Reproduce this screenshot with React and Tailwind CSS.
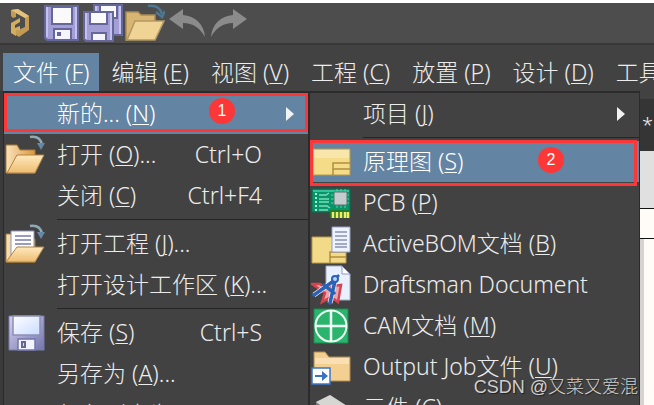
import React from 'react';
import { clsx } from 'clsx';

const fileMenu = [
  { label: '新的...', hotkey: 'N', active: true, arrow: true, badge: 1 },
  { label: '打开', hotkey: 'O', tail: '...', shortcut: 'Ctrl+O', icon: 'folder' },
  { label: '关闭', hotkey: 'C', shortcut: 'Ctrl+F4' },
  { separator: true },
  { label: '打开工程', hotkey: 'J', tail: '...', icon: 'project' },
  { label: '打开设计工作区', hotkey: 'K', tail: '...' },
  { separator: true },
  { label: '保存', hotkey: 'S', shortcut: 'Ctrl+S', icon: 'save' },
  { label: '另存为', hotkey: 'A', tail: '...' },
  { label: '保存副本为', tail: '...' },
];

const newMenu = [
  { label: '项目', hotkey: 'J', arrow: true },
  { separator: true },
  { label: '原理图', hotkey: 'S', active: true, badge: 2, icon: 'schematic' },
  { label: 'PCB', hotkey: 'P', icon: 'pcb' },
  { label: 'ActiveBOM文档', hotkey: 'B', icon: 'bom' },
  { label: 'Draftsman Document', icon: 'draftsman' },
  { label: 'CAM文档', hotkey: 'M', icon: 'cam' },
  { label: 'Output Job文件', hotkey: 'U', icon: 'job' },
  { label: '元件', hotkey: 'C', icon: 'component' },
];

const menuBar = [
  { label: '文件', hotkey: 'F', active: true },
  { label: '编辑', hotkey: 'E' },
  { label: '视图', hotkey: 'V' },
  { label: '工程', hotkey: 'C' },
  { label: '放置', hotkey: 'P' },
  { label: '设计', hotkey: 'D' },
  { label: '工具', hotkey: 'T' },
];

const Logo = () => (
  <svg viewBox="0 0 20 30" className="h-[30px] w-5">
    <path d="M1 2 8 1l11 7v14L9 29l-3-2v-4l9-4V10L6 5v4l-3 1-2-2z" fill="#c39b52" />
    <path d="M1 2 8 1l11 7-4 2-9-5z" fill="#e3c27c" />
    <path d="M1 15l9-5v4l-5 3v3l5-2v4l-4 1v5l-5-3z" fill="#d3ad62" />
  </svg>
);

const FlatDisk = () => (
  <svg viewBox="0 0 35 36" className="h-9 w-[35px]">
    <path d="M1 1h33v34H3l-2-2z" fill="#a39fd6" stroke="#65679a" strokeWidth="2" />
    <path d="M3 2v30M32 2v32" stroke="#c5c1ea" strokeWidth="2" />
    <path d="M8 2h20v17H8z" fill="#fafafa" stroke="#65679a" strokeWidth="2" />
    <path d="M10 24h17v11H10z" fill="#f4f4fa" stroke="#65679a" strokeWidth="2" />
    <path d="M13 27h4v4h-4z" fill="#65679a" />
  </svg>
);

const DiskStack = () => (
  <svg viewBox="0 0 40 38" className="h-[38px] w-10">
    <path d="M11 1h28v30H11z" fill="#a39fd6" stroke="#65679a" strokeWidth="2" />
    <path d="M13 2v28M37 2v28" stroke="#c5c1ea" strokeWidth="2" />
    <path d="M17 1h17v13H17z" fill="#fafafa" stroke="#65679a" strokeWidth="2" />
    <path d="M1 8h29v29H3l-2-2z" fill="#a39fd6" stroke="#65679a" strokeWidth="2" />
    <path d="M3 9v26M28 9v27" stroke="#c5c1ea" strokeWidth="2" />
    <path d="M7 8h17v12H7z" fill="#fafafa" stroke="#65679a" strokeWidth="2" />
    <path d="M9 29h14v8H9z" fill="#f4f4fa" stroke="#65679a" strokeWidth="2" />
  </svg>
);

const FlatFolder = () => (
  <svg viewBox="0 0 40 38" className="h-[38px] w-10">
    <path d="M1 8h12l3 3h14v8l-28 17H1z" fill="#d8b573" stroke="#a98c55" strokeWidth="1.500" />
    <path d="M10 17h29l-9 19H2z" fill="#f0d495" stroke="#b29862" strokeWidth="1.500" />
    <path d="M23 2c7-1 12 1 14 8" fill="none" stroke="#4d7895" strokeWidth="2.500" />
    <path d="M31 8l6 5 3-6" fill="none" stroke="#4d7895" strokeWidth="2.500" />
  </svg>
);

const CurvedArrow = ({ flip }) => (
  <svg viewBox="0 0 37 30" className={clsx('h-[30px] w-[37px]', flip && '-scale-x-100')} fill="#8b8b8b">
    <path d="M0 11 14 1v6c12 1 21 9 22 22C31 20 24 15 14 15v6z" />
  </svg>
);

const OpenFolder = ({ page }) => (
  <svg viewBox="0 0 40 40" className="size-10">
    <defs>
      <linearGradient id="folderBack" x1="0" x2="1">
        <stop offset="0" stopColor="#fae3bb" />
        <stop offset="1" stopColor="#dc9740" />
      </linearGradient>
      <linearGradient id="folderFront" x1="0" x2="0" y1="0" y2="1">
        <stop offset="0" stopColor="#ffe9bd" />
        <stop offset="1" stopColor="#edbc71" />
      </linearGradient>
    </defs>
    <path d="M1 10h11l3 5h15v23H1z" fill="url(#folderBack)" stroke="#aa7a35" />
    {page && (
      <g>
        <path d="M6 7h23v28H6z" fill="#fff" stroke="#9294ba" />
        <path d="M10 12h16M10 16h16M10 20h16" stroke="#9a9cbe" strokeWidth="2" />
      </g>
    )}
    <path d={page ? 'M12 23h27l-9 15H1z' : 'M12 20h27l-9 18H2z'} fill="url(#folderFront)" stroke="#b08341" />
    <path d="M25 2c7-1 11 2 12 8" fill="none" stroke="#8fa9b5" strokeWidth="2.500" />
    <path d="M32 8h8l-4 7z" fill="#6588a4" />
  </svg>
);

const SaveDisk = () => (
  <svg viewBox="-3 -2 40 40" className="size-10">
    <defs>
      <linearGradient id="disk" x1="0" x2="1" y1="0" y2="1">
        <stop offset="0" stopColor="#d8d2f0" />
        <stop offset="1" stopColor="#7375ac" />
      </linearGradient>
      <linearGradient id="diskLabel" x1="0" x2="1" y1="0" y2="1">
        <stop offset="0" stopColor="#fff" />
        <stop offset="1" stopColor="#c9dcff" />
      </linearGradient>
    </defs>
    <path d="M1 1h35v34H1z" fill="url(#disk)" stroke="#787daf" />
    <path d="M5 1h27v19H5z" fill="url(#diskLabel)" stroke="#8d8eb8" strokeWidth="1.500" />
    <path d="M10 24h17v11H10z" fill="#f2f3ff" stroke="#7577a8" strokeWidth="1.500" />
    <path d="M14 27h3v5h-3z" fill="#ddd" stroke="#66688f" strokeWidth="2" />
  </svg>
);

const Schematic = () => (
  <svg viewBox="0 0 40 40" className="size-10">
    <path d="M2 7h37v26H2z" fill="#f4dc8b" stroke="#b79a4a" />
    <path d="M3 8h35v8H3z" fill="#f8e6aa" />
    <path d="M22 33V21h17M22 27h17" fill="none" stroke="#b08f3c" strokeWidth="1.500" />
  </svg>
);

const Pcb = () => (
  <svg viewBox="0 0 40 40" className="size-10">
    <path d="M1 6h38v28H19v-5H1z" fill="#07956a" stroke="#056d50" />
    <path d="M2 8h36" stroke="#32c298" strokeWidth="2" />
    <path d="M4 11h2M4 15h2M4 19h2M4 23h2M4 27h2" stroke="#a8f0cf" strokeWidth="2" />
    <path d="M8 12h7l3-2M8 16h10M8 19h10M8 23h8l3 2M8 27h9" fill="none" stroke="#7edcb7" strokeWidth="1.500" />
    <path d="M26 6v19M30 6v19M34 6v19M20 12h18M20 16h18M20 20h18" stroke="#6dcda7" />
    <path d="M23 9h13v13H23z" fill="#c4ccd0" stroke="#4f7468" />
    <path d="M19 27h20v8H19z" fill="#267c2e" />
    <path d="M22 29v6M26 29v6M30 29v6M34 29v6M37 29v6" stroke="#f2ed65" strokeWidth="2.500" />
  </svg>
);

const Bom = () => (
  <svg viewBox="0 0 40 40" className="size-10">
    <path d="M1 13h34v26H1z" fill="#f3da88" stroke="#b79a4a" />
    <path d="M19 39V28h16M19 33h16" fill="none" stroke="#b08f3c" strokeWidth="1.500" />
    <path d="M21 3h18v25H21z" fill="#edf3ff" stroke="#969fc2" />
    <path d="M24 8h12M24 12h12M24 16h12M24 20h12M24 23h12" stroke="#8c93b0" strokeWidth="1.500" />
  </svg>
);

const Draftsman = () => (
  <svg viewBox="0 0 40 40" className="size-10">
    <path d="M15 1h16l8 8v26H15z" fill="#e9f1ff" stroke="#a5abc6" />
    <path d="M31 1v8h8z" fill="#fff" stroke="#9297b8" />
    <path d="M1 19h8l4 3 17-2-3 17-7-5-9 5 3-9z" fill="#e9a6ae" stroke="#d3444e" strokeWidth="2.500" />
    <path d="M24 15 3 30M24 16l-5 22" stroke="#eef3fc" strokeWidth="5" />
    <path d="M24 15 3 30M24 16l-5 22M13 20l10 8" stroke="#2a62b4" strokeWidth="3.500" strokeLinecap="round" />
    <circle cx="24" cy="14" r="3" fill="#bcd4f3" stroke="#2a62b4" strokeWidth="2" />
    <path d="M26 12l2-2" stroke="#2a62b4" strokeWidth="2.500" />
  </svg>
);

const Cam = () => (
  <svg viewBox="0 0 40 40" className="size-10">
    <path d="M3 3h34v34H3z" fill="#2bb56c" stroke="#168b50" />
    <circle cx="20" cy="20" r="15.500" fill="none" stroke="#effff5" strokeWidth="2" />
    <path d="M20 4v32M4 20h32" stroke="#effff5" strokeWidth="2.500" />
  </svg>
);

const OutputJob = () => (
  <svg viewBox="0 0 40 40" className="size-10">
    <path d="M3 5h11l4 5h21v24H3z" fill="#f3cf91" stroke="#b28c51" />
    <path d="M4 11h34v6H4z" fill="#f9dfb1" />
    <path d="M1 21h18v16H1z" fill="#fff" stroke="#3f76c8" strokeWidth="1.500" />
    <path d="M4 28h7v-4l6 5-6 5v-4H4z" fill="#3673cc" />
  </svg>
);

const Component = () => (
  <svg viewBox="0 0 40 40" className="size-10">
    <path d="M5 14 19 7l17 11v9L21 36 5 24z" fill="#777" />
    <path d="M5 14 19 7l17 11-15 8z" fill="#d6d6d3" />
    <path d="M7 18v10M12 22v10M17 25v10" stroke="#eee" strokeWidth="2" />
  </svg>
);

const icons = {
  folder: <OpenFolder />,
  project: <OpenFolder page />,
  save: <SaveDisk />,
  schematic: <Schematic />,
  pcb: <Pcb />,
  bom: <Bom />,
  draftsman: <Draftsman />,
  cam: <Cam />,
  job: <OutputJob />,
  component: <Component />,
};

const Label = ({ label, hotkey, tail }) => (
  <span className="whitespace-pre">
    {label}
    {hotkey && (
      <>
        {' ('}
        <span className="underline decoration-1 underline-offset-2">{hotkey}</span>)
      </>
    )}
    {tail}
  </span>
);

const Badge = ({ className, children }) => (
  <span
    className={clsx(
      'absolute flex size-[26px] items-center justify-center rounded-full bg-[#fb3737] font-["Liberation_Sans"] text-base text-white',
      className
    )}
  >
    {children}
  </span>
);

const MenuRow = ({ item }) => {
  if (item.separator) {
    return (
      <li role="separator" className="flex h-[7px] items-center pl-[53px]">
        <span className="h-px w-full bg-[#252525]" />
      </li>
    );
  }

  return (
    <li className="relative">
      <button
        type="button"
        className={clsx(
          'flex h-[41px] w-full items-center text-left',
          item.active && 'bg-[#6384a3] text-white'
        )}
      >
        <span className="flex w-[53px] shrink-0 items-center pl-px">{item.icon && icons[item.icon]}</span>
        <Label {...item} />
        {item.shortcut && <span className="ml-auto pr-[46px]">{item.shortcut}</span>}
        {item.arrow && (
          <svg viewBox="0 0 8 14" className="mr-3.5 ml-auto h-3.5 w-2" fill="#f2f2f2">
            <path d="M0 0 8 7 0 14z" />
          </svg>
        )}
      </button>
      {item.badge === 1 && (
        <div className="pointer-events-none absolute inset-x-0 top-0 bottom-0.5 border-3 border-[#fb3737]">
          <Badge className="top-0.5 right-[70px]">1</Badge>
        </div>
      )}
      {item.badge === 2 && (
        <div className="pointer-events-none absolute -top-px right-0.5 -bottom-1 left-0 border-3 border-[#fb3737]">
          <Badge className="top-1 right-[70px]">2</Badge>
        </div>
      )}
    </li>
  );
};

const Menu = ({ items, className }) => (
  <ul className={clsx('shrink-0 overflow-hidden border-x border-t-2 border-[#2b2b2b] bg-[#424242]', className)}>
    {items.map((item, i) => (
      <MenuRow key={i} item={item} />
    ))}
  </ul>
);

export default function App() {
  return (
    <div className='relative flex h-screen flex-col overflow-hidden bg-[#424242] pt-[3px] font-["Noto_Sans","Noto_Sans_CJK_SC",sans-serif] text-[23px] font-light text-[#ececec] shadow-[inset_0_3px_0_#fff]'>
      <header className="flex h-[42px] shrink-0 items-center border-b-2 border-[#383838] bg-[#4d4d4d] pl-2.5">
        <button type="button" aria-label="Home" className="mr-3.5">
          <Logo />
        </button>
        <button type="button" aria-label="Save" className="mr-1">
          <FlatDisk />
        </button>
        <button type="button" aria-label="Save all" className="mr-0.5">
          <DiskStack />
        </button>
        <button type="button" aria-label="Open" className="mr-1">
          <FlatFolder />
        </button>
        <button type="button" aria-label="Undo" className="mr-1">
          <CurvedArrow />
        </button>
        <button type="button" aria-label="Redo">
          <CurvedArrow flip />
        </button>
      </header>

      <nav className="flex h-[46px] shrink-0 items-end gap-0.5 overflow-hidden pl-[3px]">
        {menuBar.map((item) => (
          <button
            key={item.label}
            type="button"
            className={clsx('h-[38px] shrink-0 px-2.5', item.active && 'bg-[#6384a3] text-white')}
          >
            <Label {...item} />
          </button>
        ))}
      </nav>

      <main className="flex min-h-0 flex-1 bg-[#3a3a3a] pl-[3px]">
        <Menu items={fileMenu} className="w-[306px]" />
        <Menu items={newMenu} className="w-[331px]" />
        <section className="flex min-w-0 flex-1 flex-col overflow-hidden bg-[#fffcf8]">
          <div className="h-2 shrink-0 bg-[#424242]" />
          <div className="flex h-[52px] shrink-0 items-center bg-[#353535] pl-0.5 text-xl">*</div>
          <div className="h-[58px] shrink-0 border-b border-[#111] bg-[#e0e0e0]" />
          <div className="h-[30px] shrink-0 border-b border-[#111]" />
          <div className="flex-1 border-l-4 border-[#d5d3d0]" />
        </section>
      </main>

      <p className='absolute right-4 bottom-1 font-["Liberation_Sans","Noto_Sans_CJK_SC",sans-serif] text-lg font-light text-[#cfcfcf] [text-shadow:1px_1px_1px_#222]'>
        CSDN @又菜又爱混
      </p>
    </div>
  );
}
